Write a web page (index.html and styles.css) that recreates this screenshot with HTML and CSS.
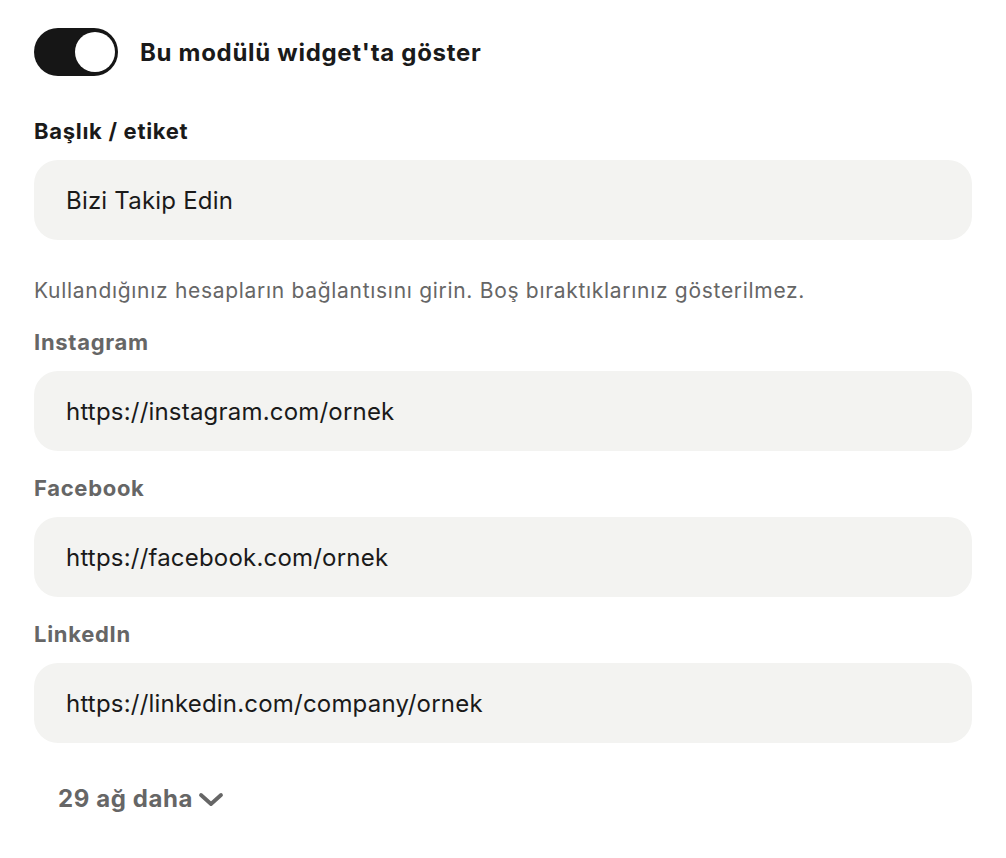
FILE: index.html
```html
<!DOCTYPE html>
<html lang="tr">
<head>
<meta charset="utf-8">
<link rel="stylesheet" href="styles.css">
</head>
<body>
<div class="panel">
  <div class="toggle-row">
    <span class="toggle"><span class="knob"></span></span>
    <span class="toggle-label">Bu modülü widget'ta göster</span>
  </div>
  <div class="field first">
    <label class="label dark">Başlık / etiket</label>
    <div class="input">Bizi Takip Edin</div>
  </div>
  <p class="help">Kullandığınız hesapların bağlantısını girin. Boş bıraktıklarınız gösterilmez.</p>
  <div class="field">
    <label class="label">Instagram</label>
    <div class="input">https://instagram.com/ornek</div>
  </div>
  <div class="field">
    <label class="label">Facebook</label>
    <div class="input">https://facebook.com/ornek</div>
  </div>
  <div class="field">
    <label class="label">LinkedIn</label>
    <div class="input">https://linkedin.com/company/ornek</div>
  </div>
  <button class="more">29 ağ daha
    <svg width="28" height="18" viewBox="0 0 28 18"><path d="M4 5 L14 14 L24 5" fill="none" stroke="#666" stroke-width="3.8" stroke-linecap="round" stroke-linejoin="round"/></svg>
  </button>
</div>
</body>
</html>
```
FILE: styles.css
```css
* { box-sizing: border-box; }
body {
  margin: 0;
  background: #fff;
  font-family: "Inter", "Noto Sans", sans-serif;
  color: #1a1a1a;
}
.panel {
  width: 1006px;
  padding: 28px 34px 0 34px;
  display: flex;
  flex-direction: column;
}
.toggle-row {
  display: flex;
  align-items: center;
  gap: 22px;
  height: 48px;
}
.toggle {
  width: 84px;
  height: 48px;
  border-radius: 24px;
  background: #161616;
  display: flex;
  align-items: center;
  justify-content: flex-end;
  padding-right: 3px;
}
.knob {
  width: 40px;
  height: 40px;
  border-radius: 50%;
  background: #fff;
}
.toggle-label {
  font-size: 24px;
  font-weight: 700;
  color: #1a1a1a;
  letter-spacing: 0.7px;
}
.field {
  display: flex;
  flex-direction: column;
  gap: 14px;
  margin-top: 22px;
}
.field.first { margin-top: 40px; }
.label {
  font-size: 22px;
  font-weight: 700;
  color: #666;
  line-height: 30px;
  letter-spacing: 0.7px;
}
.label.dark { color: #1a1a1a; }
.input {
  width: 938px;
  height: 80px;
  border-radius: 24px;
  background: #f3f3f1;
  padding: 0 32px;
  display: flex;
  align-items: center;
  font-size: 24px;
  color: #1a1a1a;
  letter-spacing: 0.2px;
}
.help {
  margin: 37px 0 0 0;
  font-size: 21px;
  color: #666;
  line-height: 28px;
  letter-spacing: 0.7px;
}
.more {
  align-self: flex-start;
  margin: 41px 0 0 24px;
  padding: 0;
  background: none;
  border: none;
  font-family: inherit;
  font-size: 24px;
  font-weight: 700;
  color: #666;
  display: flex;
  align-items: center;
  gap: 4px;
  letter-spacing: 0.6px;
}
```
